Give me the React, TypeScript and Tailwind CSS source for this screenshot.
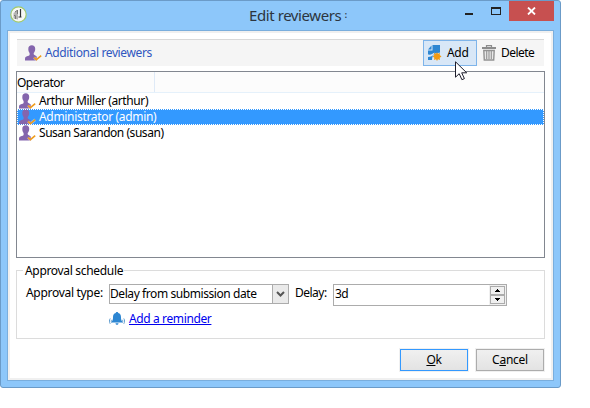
import React from "react";

function ReviewerIcon() {
  return (
    <svg width="17" height="16" viewBox="0 0 17 16" className="shrink-0">
      <path
        d="M6.800.300C9 .300 10.300 1.700 10.200 3.900c0 1.700-.6 3.100-1.500 4v1.300c.2.900 2.100 1.200 2.800 2 .5.600.6 2.500.6 4.300H0c0-1.700-.1-3 .6-3.600.8-.7 3.400-1 4-2V8C3.800 7 3.300 5.600 3.300 3.900 3.300 1.700 4.600.300 6.800.300z"
        fill="#8465ad"
      />
      <path d="M9 12.500l2.400 2.200 4.800-4" fill="none" stroke="#fff" strokeWidth="3" opacity=".35" />
      <path d="M9 12.500l2.400 2.200 4.800-4" fill="none" stroke="#ef9c1c" strokeWidth="1.600" />
    </svg>
  );
}

function AppIcon() {
  return (
    <svg width="17" height="17" viewBox="0 0 17 17">
      <circle cx="8.500" cy="8.500" r="7.700" fill="#f7f8f5" stroke="#a2c96a" strokeWidth="1.200" />
      <path d="M3.500 7L8 4v9.500l-4.500-1z" fill="#b5b5b3" />
      <path d="M5 6l2-1.500M4 9.500h1.500M7.500 4v4M5.500 10v3" stroke="#777775" strokeWidth="1" />
      <path d="M10.500 3v8M8.500 11h3" stroke="#333" strokeWidth="1.200" />
    </svg>
  );
}

function AddIcon() {
  return (
    <svg width="14" height="16" viewBox="0 0 14 16">
      <path d="M4.500 0H12v15H0V5.500h4.500z" fill="#2d86d2" />
      <path d="M0 4.500L3.500.500v4z" fill="#2d86d2" />
      <path d="M0 9.500C3 10 4.500 9 6.500 7.500c-.8 2.500-1.500 4-6.500 4.500z" fill="#d9e8f7" />
      <path d="M4 15.500c0-3 .5-5 3-7l5.500-1v8z" fill="#d9e8f7" />
      <path
        d="M9 7.200l1 1.500 2-.7-.3 2 1.800 1.500-1.800 1.300.3 2.100-2-.6L9 16l-1-1.700-2 .6.300-2.100-1.600-1.300 1.600-1.500L6 8l2 .7z"
        fill="#f29a12"
      />
    </svg>
  );
}

function TrashIcon() {
  return (
    <svg width="14" height="16" viewBox="0 0 14 16">
      <path d="M4.500 2V.600h5V2" fill="none" stroke="#8c8c8c" strokeWidth="1.200" />
      <path d="M0 2h14v2H0z" fill="#8c8c8c" />
      <path d="M1.800 5.500h10.400L11.700 15H2.300z" fill="#e8e8e8" stroke="#929292" strokeWidth="1.400" />
      <path d="M4.700 6v8M7 6v8M9.300 6v8" stroke="#929292" strokeWidth="1.100" />
    </svg>
  );
}

function BellIcon() {
  return (
    <svg width="17" height="13" viewBox="0 0 17 13" className="relative -top-px">
      <path d="M8 0c.8 0 1.200.4 1.200 1 2.100.6 2.800 2.100 2.800 4.200 0 2.300.4 3.300 1.300 4.300v1H2.700v-1C3.600 8.500 4 7.500 4 5.200 4 3.100 4.700 1.600 6.800 1 6.800.4 7.200 0 8 0z" fill="#2d86d2" />
      <path d="M6.500 11.200h3c-.2 1-.7 1.500-1.500 1.500s-1.300-.5-1.500-1.500z" fill="#2d86d2" />
      <path d="M1.200 6.500c-1 1.700-1 3.600 0 5.300M2.700 7.800c-.6 1-.6 2 0 2.900M14.800 6.500c1 1.700 1 3.600 0 5.300M13.300 7.800c.6 1 .6 2 0 2.900" fill="none" stroke="#5f9ccf" strokeWidth="1" />
    </svg>
  );
}

function Cursor() {
  return (
    <svg width="13" height="20" viewBox="0 0 13 20" className="absolute left-[31px] top-[20px] z-10">
      <path d="M.500.800v15.400l3.700-3.500 2.700 6 2.500-1.100-2.700-5.800h5z" fill="#fff" stroke="#1d1d2b" strokeWidth="1" />
    </svg>
  );
}

const reviewers = [
  { name: "Arthur Miller (arthur)", selected: false, spacing: "tracking-[-0.4px]" },
  { name: "Administrator (admin)", selected: true, spacing: "tracking-[-0.32px]" },
  { name: "Susan Sarandon (susan)", selected: false, spacing: "tracking-[-0.46px]" },
];

function TitleBar() {
  return (
    <header className="flex h-[29px] shrink-0">
      <div className="w-[242px] pl-[9px] pt-[5px]">
        <AppIcon />
      </div>
      <h1 className="w-[206px] whitespace-nowrap pl-[6px] pt-[4px] text-[15px] leading-5 tracking-[-0.42px] text-[#2c3540]">
        Edit reviewers <span className="relative -top-[3px] text-[8px] font-bold">:</span>
      </h1>
      <div className="flex">
        <div className="w-[35px] pl-[16px] pt-[12px]">
          <div className="h-[2px] w-2 bg-[#222]" />
        </div>
        <div className="w-[25px] pl-[7px] pt-[6px]">
          <div className="h-2 w-[10px] border border-t-2 border-[#222]" />
        </div>
        <div className="flex h-5 w-[45px] items-center justify-center bg-[#c75050]">
          <svg width="9" height="8" viewBox="0 0 9 8">
            <path d="M1 .500l7 7M8 .500l-7 7" stroke="#fff" strokeWidth="1.800" />
          </svg>
        </div>
      </div>
    </header>
  );
}

function Toolbar() {
  return (
    <div className="ml-px flex h-[27px] w-[527px] border-t border-[#d9d9d9] bg-[#f5f5f5]">
      <div className="flex flex-1 items-center pl-2">
        <ReviewerIcon />
        <span className="ml-[3px] whitespace-nowrap tracking-[-0.38px] text-[#3057c0]">Additional reviewers</span>
      </div>
      <div className="relative flex h-[26px] w-[54px] items-center border border-[#7eb4ea] bg-[#d8e7f7] pl-1">
        <AddIcon />
        <span className="ml-[5px] tracking-[-0.3px]">Add</span>
        <Cursor />
      </div>
      <div className="flex w-[67px] items-center pl-[5px]">
        <TrashIcon />
        <span className="ml-[5px] tracking-[-0.55px]">Delete</span>
      </div>
    </div>
  );
}

function ReviewerList() {
  return (
    <div className="mt-[5px] h-[187px] border border-[#828790] bg-white">
      <div className="flex h-[21px] border-b border-[#e5f1fb] bg-[#fcfcfc]">
        <div className="w-[138px] border-r border-[#dfeaf7] pt-[3px] leading-4 tracking-[-0.5px]">Operator</div>
      </div>
      {reviewers.map((r) => (
        <div
          key={r.name}
          className={
            r.selected
              ? "relative flex h-4 items-center bg-[#3399ff] pl-[2px] text-white outline-1 -outline-offset-1 outline-dotted outline-white"
              : "flex h-4 items-center pl-[2px]"
          }
        >
          <ReviewerIcon />
          <span className={"ml-[3px] whitespace-nowrap leading-4 " + r.spacing}>{r.name}</span>
        </div>
      ))}
    </div>
  );
}

function Schedule() {
  return (
    <section className="mt-[12px] h-[69px] border border-[#dcdcdc]">
      <div className="-mt-2 ml-[6px] w-[101px] whitespace-nowrap bg-white pl-[2px] leading-4 tracking-[-0.32px]">Approval schedule</div>
      <div className="mt-[5px] flex h-[22px] items-start">
        <span className="w-[92px] whitespace-nowrap pl-[9px] pt-px leading-4 tracking-[-0.3px]">Approval type:</span>
        <div className="flex h-5 w-[180px] border border-[#acacac]">
          <span className="flex-1 whitespace-nowrap leading-[18px] tracking-[-0.42px]">Delay from submission date</span>
          <span className="flex w-[16px] items-center justify-center border-l border-[#acacac] bg-[#eaeaea]">
            <svg width="9" height="7" viewBox="0 0 9 7">
              <path d="M1 1l3.500 3.500L8 1" fill="none" stroke="#555" strokeWidth="2" />
            </svg>
          </span>
        </div>
        <span className="w-[44px] pl-[6px] pt-px leading-4 tracking-[-0.5px]">Delay:</span>
        <div className="flex h-[22px] w-[174px] border border-[#acacac]">
          <span className="flex-1 pl-px leading-[18px] tracking-[-0.5px]">3d</span>
          <div className="flex w-[17px] flex-col bg-[#f0f0f0] px-px py-px">
            <div className="flex h-[9px] w-[15px] items-center justify-center border border-[#acacac]">
              <svg width="5" height="3" viewBox="0 0 5 3" shapeRendering="crispEdges"><path d="M2 0h1v1h1v1h1v1H0V2h1V1h1z" /></svg>
            </div>
            <div className="flex h-[9px] w-[15px] items-center justify-center border border-[#acacac]">
              <svg width="5" height="3" viewBox="0 0 5 3" shapeRendering="crispEdges"><path d="M0 0h5v1H4v1H3v1H2V2H1V1H0z" /></svg>
            </div>
          </div>
        </div>
      </div>
      <div className="ml-[92px] mt-[5px] flex items-center">
        <BellIcon />
        <a href="#" className="ml-[3px] whitespace-nowrap leading-4 tracking-[-0.38px] text-[#0000ee] underline">Add a reminder</a>
      </div>
    </section>
  );
}

function Actions() {
  return (
    <div className="mt-[10px] flex justify-end gap-2 pr-px">
      <button className="h-[22px] w-[68px] border border-[#3399ff] bg-gradient-to-b from-[#f0f0f0] to-[#e3e3e3] leading-5 tracking-[-0.3px] outline-1 outline-[#f0f0f0]">
        <span className="underline">O</span>k
      </button>
      <button className="h-[22px] w-[68px] border border-[#acacac] bg-gradient-to-b from-[#f0f0f0] to-[#e3e3e3] leading-5 tracking-[-0.25px] outline-1 outline-[#f0f0f0]">
        C<span className="underline">a</span>ncel
      </button>
    </div>
  );
}

export default function App() {
  return (
    <div className="h-[408px] w-[590px] overflow-hidden bg-white font-['Noto_Sans',sans-serif] text-[12px] text-black">
      <div className="flex h-[388px] w-[561px] flex-col rounded-[3px] border border-[#6b9bc8] bg-[#8dc7fa]">
        <TitleBar />
        <main className="mx-[6px] h-[351px] border border-[#7aaedd] bg-white">
          <div className="h-[349px] border-2 border-[#f0f0f0] px-[6px] pt-[6px]">
            <Toolbar />
            <ReviewerList />
            <Schedule />
            <Actions />
          </div>
        </main>
      </div>
    </div>
  );
}
